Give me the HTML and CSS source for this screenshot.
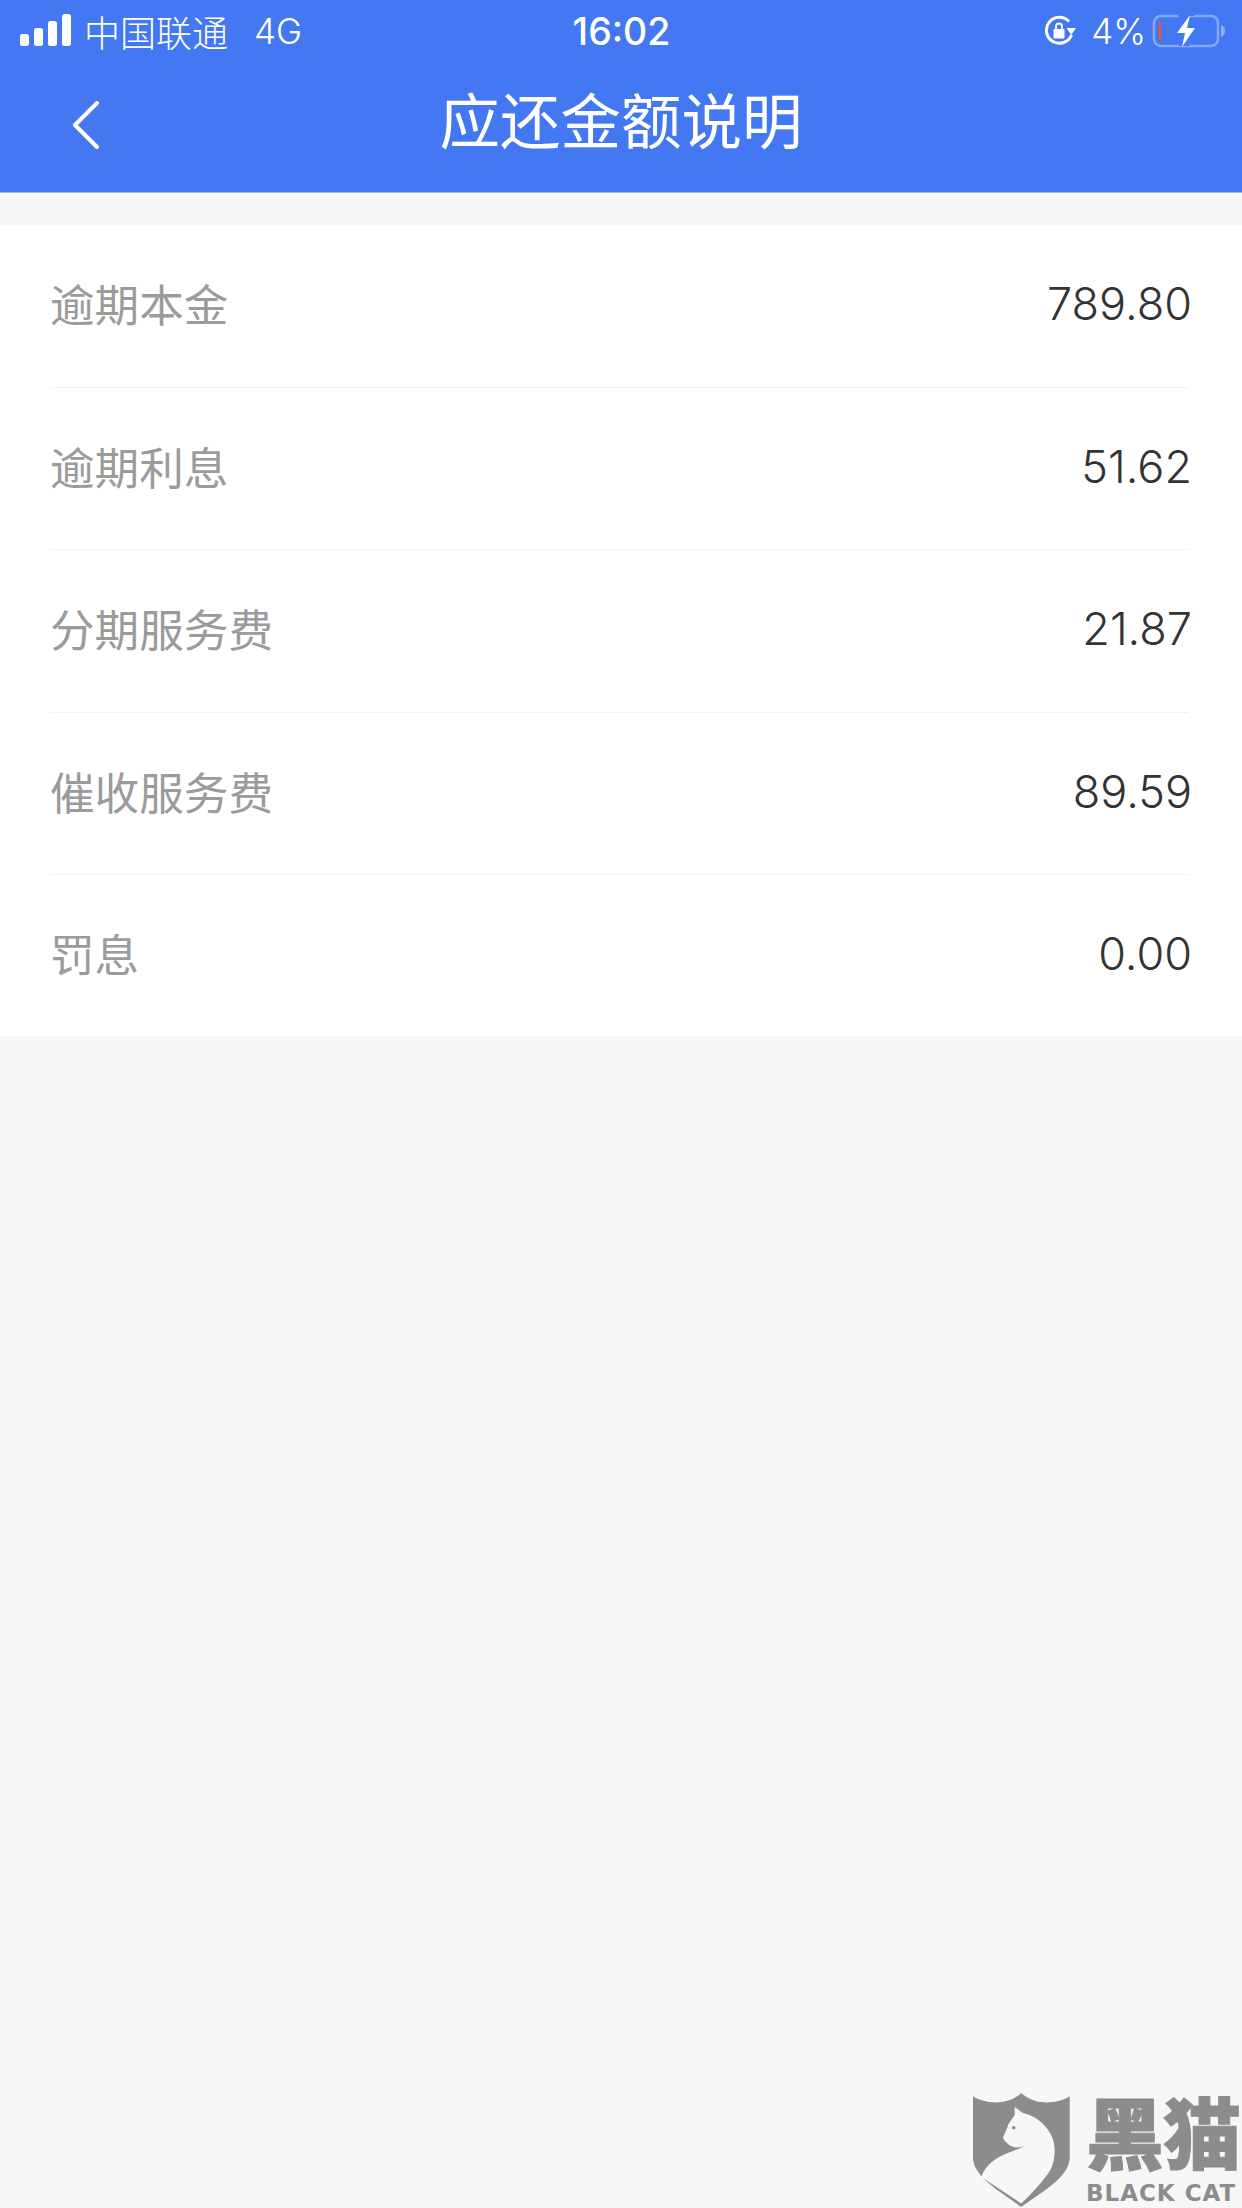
FILE: index.html
```html
<!DOCTYPE html>
<html lang="zh-CN">

<head>
    <title>应还金额说明</title>
    <meta charset="UTF-8">
    <meta name="viewport" content="width=device-width, initial-scale=1">
    <link rel="stylesheet" href="styles.css">
</head>

<body>
    <div class="page">
        <div class="top">
            <div class="status">
                <div class="status-left">
                    <svg class="signal" width="52" height="34" viewBox="0 0 52 34">
                        <rect x="0" y="20" width="9" height="12" rx="2.5" fill="#fff" />
                        <rect x="14" y="14" width="9" height="18" rx="2.5" fill="#fff" />
                        <rect x="28" y="7" width="9" height="25" rx="2.5" fill="#fff" />
                        <rect x="42" y="0" width="9" height="32" rx="2.5" fill="#fff" />
                    </svg>
                    <span class="carrier">中国联通</span>
                    <span class="net">4G</span>
                </div>
                <div class="clock">16:02</div>
                <div class="status-right">
                    <svg class="lock" width="32" height="32" viewBox="0 0 32 32">
                        <path d="M27.500 20A13 13 0 1 1 25 6.500" fill="none" stroke="#fff" stroke-width="3" />
                        <path d="M22.500 13H32l-4.700 7z" fill="#fff" />
                        <rect x="9.500" y="14" width="11" height="9.500" rx="1.200" fill="#fff" />
                        <path d="M12 14v-2.500a3 3 0 0 1 6 0V14" fill="none" stroke="#fff" stroke-width="1.800" />
                    </svg>
                    <span class="percent">4%</span>
                    <svg class="battery" width="74" height="34" viewBox="0 0 74 34">
                        <rect x="2" y="2" width="64" height="30" rx="7" fill="none" stroke="#fff" stroke-opacity=".35" stroke-width="2.500" />
                        <path d="M69 11c3 1 4 3 4 6s-1 5-4 6z" fill="#fff" fill-opacity=".4" />
                        <rect x="7" y="8" width="2.500" height="18" fill="#f0503c" />
                        <path d="M26 0h16v2H37v30H27V2h-1z" fill="#4478f2" />
                        <path d="M38 1 25 19h8l-3 14 13-19h-8z" fill="#fff" />
                    </svg>
                </div>
            </div>
            <div class="nav">
                <svg class="back" width="28" height="48" viewBox="0 0 28 48">
                    <path d="M25 2 3 24 25 46" fill="none" stroke="#fff" stroke-width="4" stroke-linecap="round" stroke-linejoin="round" />
                </svg>
                <h1 class="title">应还金额说明</h1>
            </div>
        </div>

        <div class="list">
            <div class="row"><span class="label">逾期本金</span><span class="value">789.80</span></div>
            <div class="row"><span class="label">逾期利息</span><span class="value">51.62</span></div>
            <div class="row"><span class="label">分期服务费</span><span class="value">21.87</span></div>
            <div class="row"><span class="label">催收服务费</span><span class="value">89.59</span></div>
            <div class="row"><span class="label">罚息</span><span class="value">0.00</span></div>
        </div>

        <div class="mark">
            <svg class="shield" width="97" height="114" viewBox="0 0 97 114">
                <path d="M0 3.300C14 12 36 12 48.300 0 61 12 83 12 96.700 3.300V64C96.700 84 70 98 48.300 114 27 98 0 84 0 64Z" fill="#8c8c8c" />
                <path d="M41.700 14l8.300 6C68 24 81.700 40 81.700 57c0 9-2 17-6.700 23.700C67 92 58 101 48.300 110.500L8.300 84C11 76 16 71 22 66.500 30 61 42 58 51.700 53 45 55.500 39 54.500 35 51 32 48 30 46 30 44 32 40 34 36 35 32 37 28 40 25 41.700 22Z" fill="#f7f7f7" />
                <circle cx="40.700" cy="34.700" r="1.800" fill="#8c8c8c" />
            </svg>
            <div class="mark-text">
                <div class="mark-cn">黑猫</div>
                <div class="mark-en">BLACK CAT</div>
            </div>
        </div>
    </div>
</body>

</html>
```

FILE: styles.css
```css
* {
    margin: 0;
    padding: 0;
    box-sizing: border-box;
}

html,
body {
    width: 1242px;
    height: 2208px;
    overflow: hidden;
}

body {
    background: #f7f7f7;
    font-family: "Inter", "Noto Sans CJK SC", sans-serif;
}

.page {
    position: relative;
    height: 2208px;
}

.top {
    height: 193px;
    background: #4478f2;
    border-bottom: 1px solid #a9b4c8;
    color: #fff;
}

.status {
    height: 62px;
    padding: 0 16px 0 20px;
    display: grid;
    grid-template-columns: 1fr auto 1fr;
    align-items: center;
}

.status-left {
    display: flex;
    align-items: center;
}

.carrier {
    margin-left: 12px;
    font-size: 36px;
    font-weight: 300;
}

.net {
    margin-left: 26px;
    font-size: 35px;
    font-weight: 300;
}

.clock {
    margin-right: 3px;
    font-size: 37.500px;
    font-weight: 500;
}

.status-right {
    display: flex;
    align-items: center;
    justify-content: flex-end;
}

.percent {
    margin-left: 15px;
    margin-right: 6px;
    font-size: 35px;
    font-weight: 300;
}

.nav {
    height: 130px;
    padding-bottom: 10px;
    display: flex;
    align-items: center;
    justify-content: center;
    position: relative;
}

.back {
    position: absolute;
    left: 72px;
    top: 39px;
}

.title {
    font-size: 60.500px;
    font-weight: 400;
    line-height: 1;
}

.list {
    margin-top: 32px;
    background: #fff;
}

.row {
    height: 162.500px;
    margin: 0 53px 0 50px;
    padding-bottom: 4px;
    display: flex;
    align-items: center;
    justify-content: space-between;
    border-bottom: 1px solid #f2f2f2;
}

.row:last-child {
    height: 161px;
    border-bottom: 0;
}

.label {
    margin-bottom: 2px;
    font-size: 44.600px;
    color: #9b9b9b;
}

.value {
    margin-right: -3px;
    font-size: 45px;
    font-weight: 300;
    color: #333;
}

.mark {
    position: absolute;
    right: 2px;
    bottom: 1px;
    display: flex;
    align-items: flex-start;
    gap: 16px;
}

.mark-text {
    color: #8c8c8c;
    padding-top: 2px;
}

.mark-cn {
    font-family: "Liberation Sans", "Noto Sans CJK SC", sans-serif;
    font-size: 78px;
    font-weight: 900;
    line-height: 84px;
    letter-spacing: -1px;
    white-space: nowrap;
    -webkit-text-stroke: 1px #8c8c8c;
}

.mark-en {
    font-family: "DejaVu Sans", sans-serif;
    font-size: 23px;
    font-weight: 700;
    line-height: 28px;
    letter-spacing: 1px;
    white-space: nowrap;
}
```
